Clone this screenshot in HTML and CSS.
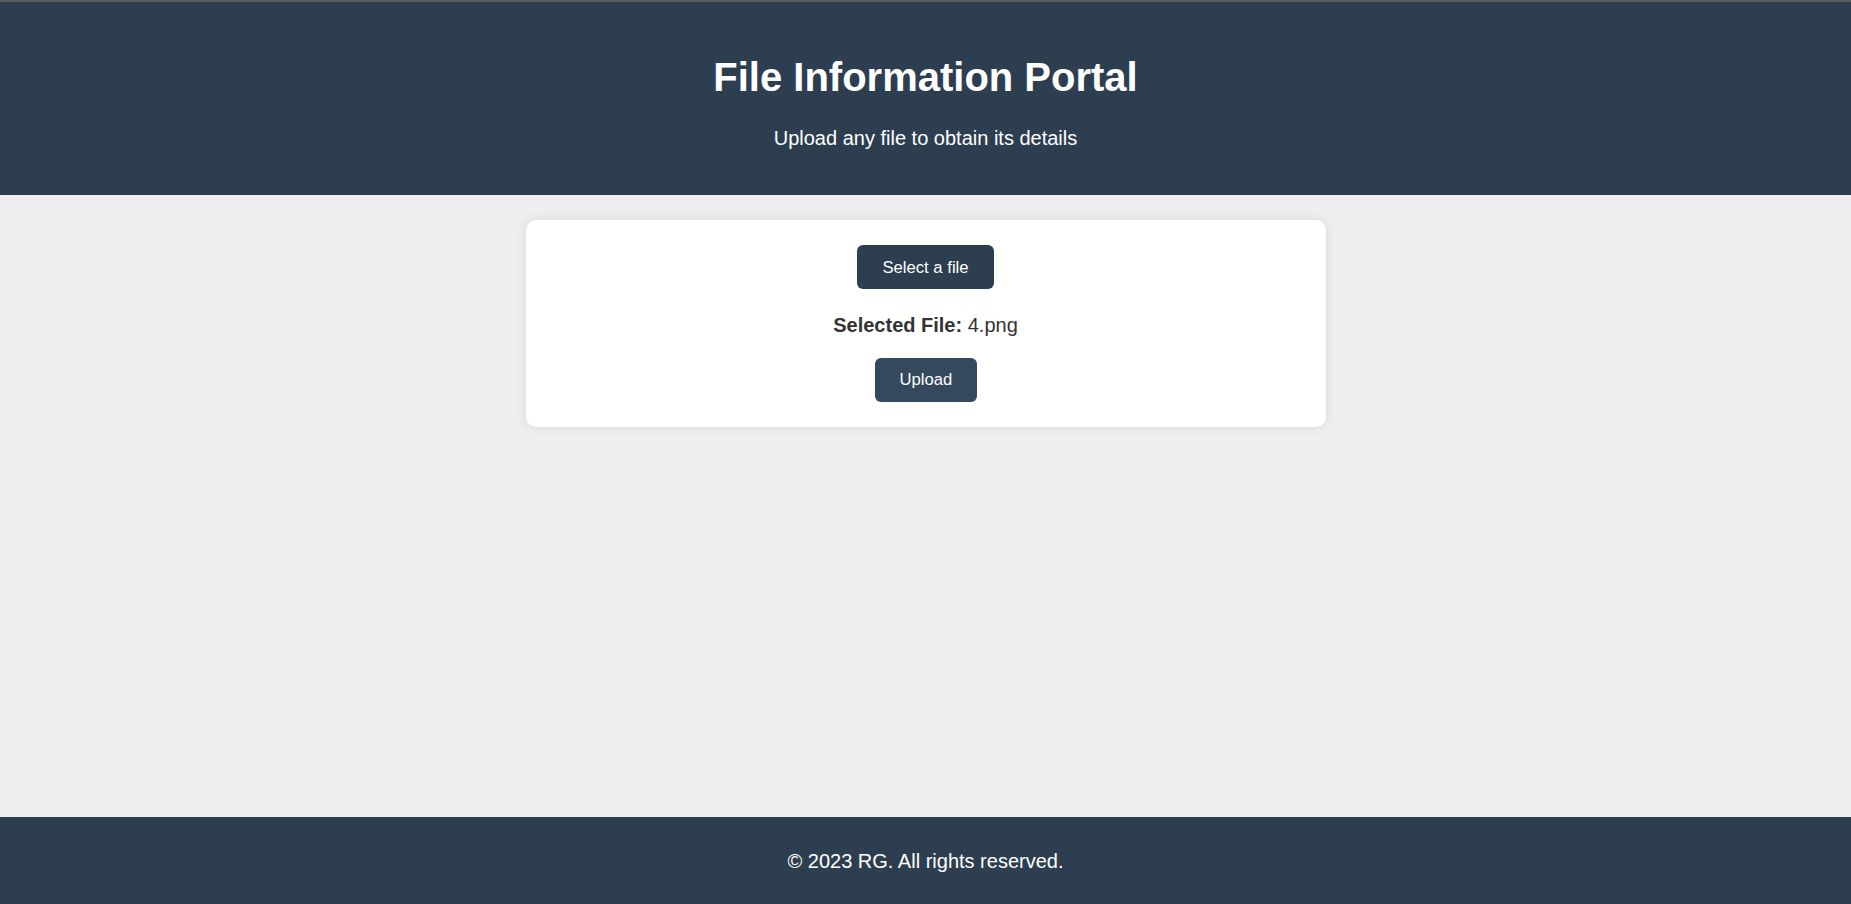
FILE: index.html
```html
<!DOCTYPE html>
<html lang="en">
<head>
<meta charset="utf-8">
<title>File Information Portal</title>
<link rel="stylesheet" href="styles.css">
</head>
<body>
<div class="topline"></div>
<header class="site-header">
  <h1>File Information Portal</h1>
  <p>Upload any file to obtain its details</p>
</header>
<main class="main">
  <section class="card">
    <label class="btn btn-select">Select a file</label>
    <p class="selected"><strong>Selected File:</strong> 4.png</p>
    <button class="btn btn-upload">Upload</button>
  </section>
</main>
<footer class="site-footer">
  <p>© 2023 RG. All rights reserved.</p>
</footer>
</body>
</html>
```
FILE: styles.css
```css
html, body {
  margin: 0;
  padding: 0;
  height: 100%;
}
body {
  font-family: "Liberation Sans", Arial, sans-serif;
  background: #efefef;
  color: #333;
  display: flex;
  flex-direction: column;
  min-height: 904px;
}
.topline {
  height: 2px;
  background: #5a5a5a;
}
.site-header {
  background: #2c3e50;
  color: #fff;
  text-align: center;
  padding: 25px 25px 45px;
}
.site-header h1 {
  font-size: 40px;
  font-weight: bold;
  margin: 27px 0 27px;
  line-height: 46px;
}
.site-header p {
  font-size: 20px;
  line-height: 23px;
  margin: 0;
}
.main {
  flex: 1;
  display: flex;
  flex-direction: column;
  align-items: center;
}
.card {
  width: 800px;
  box-sizing: border-box;
  margin-top: 25px;
  background: #fff;
  border-radius: 10px;
  box-shadow: 0 0 12px rgba(0, 0, 0, 0.1);
  padding: 25px;
  display: flex;
  flex-direction: column;
  align-items: center;
}
.btn {
  font-family: "Liberation Sans", Arial, sans-serif;
  font-size: 16.67px;
  line-height: 19px;
  color: #fff;
  border: none;
  border-radius: 6px;
  padding: 12.5px 25px;
  cursor: pointer;
  display: inline-block;
}
.btn-select {
  background: #2c3e50;
}
.btn-upload {
  background: #34495e;
  width: 102px;
}
.selected {
  font-size: 20px;
  line-height: 23px;
  margin: 25px 0 20.5px;
}
.site-footer {
  background: #2c3e50;
  color: #fff;
  text-align: center;
  padding: 13px 12px 0;
  height: 74px;
  flex-shrink: 0;
}
.site-footer p {
  margin: 20px 0 0;
  font-size: 20px;
  line-height: 23px;
}
```
